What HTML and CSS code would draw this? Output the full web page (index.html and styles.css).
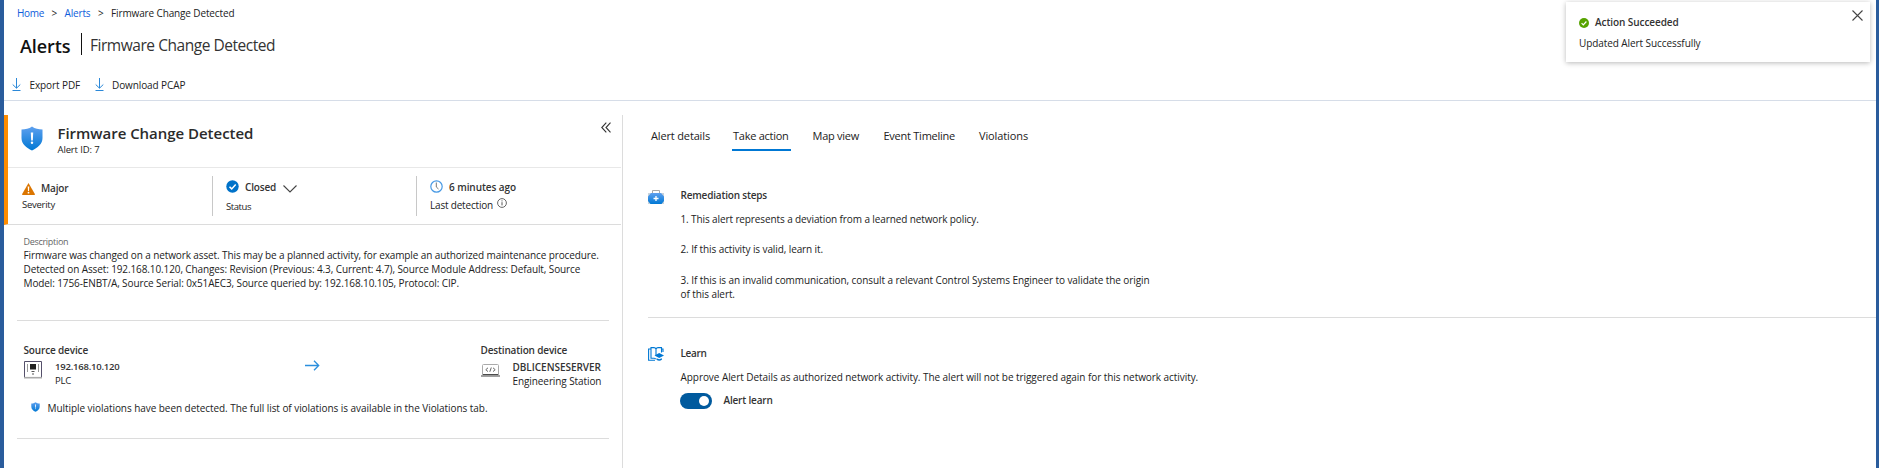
FILE: index.html
```html
<!DOCTYPE html>
<html lang="en">
<head>
<meta charset="utf-8">
<title>Alerts - Firmware Change Detected</title>
<link rel="stylesheet" href="styles.css">
</head>
<body>
<svg width="0" height="0" class="defs" aria-hidden="true">
  <defs>
    <linearGradient id="blue" x1="0" y1="0" x2="0" y2="1"><stop offset="0" stop-color="#5ea0ef"/><stop offset="1" stop-color="#0078d4"/></linearGradient>
    <symbol id="shield" viewBox="0 0 22 25">
      <path d="M11 .5C8 2.700 4.500 3.500.5 3.500V12c0 6 5 10 10.500 12.500C16.500 22 21.500 18 21.500 12V3.500c-4 0-7.500-.8-10.500-3z" fill="url(#blue)"/>
      <path d="M9.800 6.500h2.400l-.4 8h-1.600z" fill="#fff"/><circle cx="11" cy="16.800" r="1.200" fill="#fff"/>
    </symbol>
    <symbol id="download" viewBox="0 0 9 13"><path d="M4.500 0v10M.7 6.500l3.800 3.700 3.800-3.700M.5 12.500h8" fill="none" stroke="#2b88d8"/></symbol>
  </defs>
</svg>
<div class="page">
  <nav class="crumbs">
    <a class="c-home">Home</a><span class="sep">&gt;</span><a class="c-alerts">Alerts</a><span class="sep">&gt;</span><span class="c-now">Firmware Change Detected</span>
  </nav>
  <header class="heading"><h1>Alerts</h1><span class="bar"></span><span class="subtitle">Firmware Change Detected</span></header>
  <div class="commands">
    <svg width="9" height="13"><use href="#download"/></svg><span class="cmd first">Export PDF</span>
    <svg width="9" height="13"><use href="#download"/></svg><span class="cmd">Download PCAP</span>
  </div>
  <main class="body">
    <section class="left">
      <div class="card">
        <div class="card-head">
          <svg class="big-shield" width="22" height="25"><use href="#shield"/></svg>
          <div class="card-title"><h2>Firmware Change Detected</h2><p class="alert-id">Alert ID: 7</p></div>
          <svg class="collapse" width="10" height="11" viewBox="0 0 10 11"><path d="M5.300.7L.8 5.500l4.500 4.800M9.500.7L5 5.500l4.500 4.800" fill="none" stroke="#333" stroke-width="1.100"/></svg>
        </div>
        <div class="facts">
          <div class="fact severity">
            <div class="value"><svg width="13" height="12" viewBox="0 0 13 12"><path d="M6.500 0L13 11.200q0 .8-.8.8H.8q-.8 0-.8-.8z" fill="#db7500"/><path d="M5.700 3.500h1.600L7 8H6z" fill="#fff"/><circle cx="6.500" cy="9.700" r=".9" fill="#fff"/></svg><b class="t-major">Major</b></div>
            <p class="t-severity">Severity</p>
          </div>
          <div class="fact status">
            <div class="value"><svg width="13" height="13" viewBox="0 0 13 13"><circle cx="6.500" cy="6.500" r="6.200" fill="#0072c9"/><path d="M3.500 6.700l2.200 2.200 4-4.300" fill="none" stroke="#fff" stroke-width="1.500"/></svg><b class="t-closed">Closed</b><svg class="chev" width="14" height="8" viewBox="0 0 14 8"><path d="M.5.500L7 7 13.500.5" fill="none" stroke="#444" stroke-width="1.100"/></svg></div>
            <p class="t-status">Status</p>
          </div>
          <div class="fact time">
            <div class="value"><svg width="13" height="13" viewBox="0 0 13 13"><circle cx="6.500" cy="6.500" r="5.700" fill="#fff" stroke="#4a9ae4" stroke-width="1.200"/><path d="M6.300 2.500V7l2.200 2" fill="none" stroke="#777"/></svg><b class="t-time">6 minutes ago</b></div>
            <p class="t-last">Last detection<svg width="10" height="10" viewBox="0 0 10 10"><circle cx="5" cy="5" r="4.400" fill="none" stroke="#555" stroke-width=".9"/><path d="M5 4.200v3.200M5 2.400v1" stroke="#555"/></svg></p>
          </div>
        </div>
      </div>
      <div class="description">
        <p class="label">Description</p>
        <p>Firmware was changed on a network asset. This may be a planned activity, for example an authorized maintenance procedure.<br>Detected on Asset: 192.168.10.120, Changes: Revision (Previous: 4.3, Current: 4.7), Source Module Address: Default, Source<br>Model: 1756-ENBT/A, Source Serial: 0x51AEC3, Source queried by: 192.168.10.105, Protocol: CIP.</p>
      </div>
      <div class="devices">
        <div class="pair">
          <div class="device source">
            <b class="t-src">Source device</b>
            <div class="dev-row">
              <svg width="18" height="18" viewBox="0 0 18 18"><path d="M.5 17V.5h17V17" fill="#fff" stroke="#55506b"/><path d="M0 16.700h18" stroke="#aaa" stroke-width="1.600"/><path d="M6 3h6v5.500H6z" fill="#222"/><path d="M3.500 3v8M14.500 3v8" stroke="#999"/><path d="M7.500 10.500h3M9 12v2" stroke="#555"/></svg>
              <div><b class="t-ip">192.168.10.120</b><p class="t-plc">PLC</p></div>
            </div>
          </div>
          <svg class="arrow" width="15" height="11" viewBox="0 0 15 11"><path d="M0 5.500h13.500M9 .8l4.700 4.700L9 10.200" fill="none" stroke="#2b8fdd" stroke-width="1.300"/></svg>
          <div class="device dest">
            <b class="t-dst">Destination device</b>
            <div class="dev-row">
              <svg class="laptop" width="19" height="13" viewBox="0 0 19 13"><path d="M1.500 11V1.500q0-1 1-1h14q1 0 1 1V11" fill="#fff" stroke="#aaa"/><path d="M2 10.700h15" stroke="#222"/><path d="M0 12h19" stroke="#888" stroke-width="1.600"/><path d="M7 3.800L4.800 5.700 7 7.600M12 3.800l2.200 1.900L12 7.600M10.300 3.500l-1.500 4.300" fill="none" stroke="#555" stroke-width=".9"/></svg>
              <div><b class="t-host">DBLICENSESERVER</b><p class="t-eng">Engineering Station</p></div>
            </div>
          </div>
        </div>
        <div class="notice"><svg width="9" height="10"><use href="#shield"/></svg><span>Multiple violations have been detected. The full list of violations is available in the Violations tab.</span></div>
      </div>
    </section>
    <section class="right">
      <nav class="tabs"><span class="tab tab-details">Alert details</span><span class="tab tab-action">Take action</span><span class="tab tab-map">Map view</span><span class="tab tab-events">Event Timeline</span><span class="tab tab-viol">Violations</span></nav>
      <div class="block remediation">
        <svg class="kit" width="16" height="14" viewBox="0 0 16 14"><path d="M4.500 3.500V.5h7v3" fill="none" stroke="#a9a9a9"/><rect y="3" width="16" height="11" rx="1" fill="url(#blue)"/><path d="M0 3h3L0 6.500zM16 3h-3l3 3.500zM0 11l2.500 3H0zM16 11l-2.500 3H16z" fill="#c9d3dc"/><path d="M8 6v5M5.500 8.500h5" stroke="#fff" stroke-width="1.300"/></svg>
        <div>
          <b class="t-rem">Remediation steps</b>
          <p class="step1">1. This alert represents a deviation from a learned network policy.</p>
          <p class="step2">2. If this activity is valid, learn it.</p>
          <p class="step3">3. If this is an invalid communication, consult a relevant Control Systems Engineer to validate the origin<br>of this alert.</p>
        </div>
      </div>
      <div class="block learn">
        <svg class="book" width="16" height="14" viewBox="0 0 16 14"><path d="M7.700 12.300c0-.7-.7-1.100-1.500-1.100H3V.6h3q1.500 0 2 1.400v6M8 2Q8.500.6 10 .6h3.500v5M3 2H.6v11.300H7M13.500 2h1.500v3" fill="none" stroke="#0078d4" stroke-width="1.100"/><path d="M6.500 8.500L11.200 6 16 8.500 11.200 11z" fill="#0078d4"/><path d="M8.500 11.300v1.500q2.700 1.800 5.400 0v-1.500l-2.700 1z" fill="#0078d4"/></svg>
        <div>
          <b class="t-learn">Learn</b>
          <p class="approve">Approve Alert Details as authorized network activity. The alert will not be triggered again for this network activity.</p>
          <div class="toggle-row"><span class="toggle"><i></i></span><b class="t-toggle">Alert learn</b></div>
        </div>
      </div>
    </section>
  </main>
  <aside class="toast">
    <div class="toast-head"><svg width="10" height="10" viewBox="0 0 10 10"><circle cx="5" cy="5" r="5" fill="#57a300"/><path d="M2.600 5.200l1.700 1.700 3.100-3.400" fill="none" stroke="#fff" stroke-width="1.200"/></svg><b>Action Succeeded</b></div>
    <p>Updated Alert Successfully</p>
    <svg class="close" width="11" height="11" viewBox="0 0 11 11"><path d="M.5.5l10 10M10.500.5l-10 10" stroke="#444" stroke-width="1.100"/></svg>
  </aside>
</div>
</body>
</html>
```
FILE: styles.css
```css
*{box-sizing:border-box}
body{margin:0;font:10px/14px "Open Sans","Noto Sans",sans-serif;letter-spacing:-.1px;color:#222;background:#fff;overflow:hidden}
h1,h2,p{margin:0;font-weight:400}
b{font-weight:600;color:#333}
svg{display:block;flex:none}
.defs{position:absolute}
.page{position:relative;height:468px;border-left:4px solid #2a5c9c;border-right:3px solid #2a5c9c;white-space:nowrap;padding-top:6px}
.crumbs{display:flex;height:14px;padding-left:13px}
.crumbs a{color:#0e5ddb}
.c-home{width:27px;letter-spacing:-.32px}
.c-alerts{width:26px;letter-spacing:-.15px}
.sep{width:20.500px;text-align:center}
.c-now{letter-spacing:-.13px}
.heading{display:flex;height:22px;margin-top:13px;padding-left:16px}
h1{font-size:18px;font-weight:600;line-height:26px;letter-spacing:-.08px;width:61px;color:#111}
.bar{width:1px;height:22px;background:#111}
.subtitle{font-size:15.500px;line-height:25px;letter-spacing:-.46px;margin-left:8px;color:#333}
.commands{display:flex;height:46px;border-bottom:1px solid #d6dde8;padding:23px 0 0 8px}
.cmd{margin-left:8.500px}
.first{width:65px}
.body{display:flex;height:367px;padding-top:14px}
.left{width:619px;border-right:1px solid #dcdcdc}
.card{width:617px;height:110px;border-left:4px solid #ff8c00;border-bottom:1px solid #dcdcdc}
.card-head{display:flex;height:53px;border-bottom:1px solid #e8e8e8;padding-left:13px}
.big-shield{margin-top:11px}
.card-title{margin:8px 0 0 14.500px;width:543.500px}
h2{font-size:15px;line-height:20px;font-weight:600;color:#2b2b2b}
.card-title h2{letter-spacing:-.03px}
.alert-id{font-size:9.500px;letter-spacing:-.13px}
.collapse{margin-top:7px}
.facts{display:flex;padding-top:8px}
.fact{height:40px}
.severity{width:204px;padding:5px 0 0 14px}
.status{width:204px;padding:4px 0 0 13px;border-left:1px solid #c8c8c8}
.time{padding:4px 0 0 13px;border-left:1px solid #c8c8c8}
.value{display:flex}
.severity svg{margin-top:2px}
.value b{margin-left:6px}
.status .chev{margin:5px 0 0 7px}
.t-major{letter-spacing:-.15px}
.t-severity{font-size:9.500px;letter-spacing:-.26px;margin-top:3px}
.t-closed{letter-spacing:-.18px}
.t-status{font-size:9.500px;letter-spacing:-.44px;margin-top:6px}
.t-time{letter-spacing:-.07px}
.t-last{display:flex;letter-spacing:-.19px;margin-top:4px}
.t-last svg{margin:0 0 0 4px}
.description{height:95px;margin:0 13px;padding:10px 0 0 6.500px}
.description p{letter-spacing:-.11px}
.description .label{font-size:9px;letter-spacing:-.3px;line-height:14px;height:13px;color:#666}
.devices{height:119px;margin:0 13px;border:1px solid #dcdcdc;border-width:1px 0;padding:22px 0 0 6.500px}
.pair{display:flex;height:58px}
.device b{display:block}
.source{width:281px}
.dest{margin-left:161px}
.dev-row{display:flex;gap:13.500px;padding-top:2px}
.source .dev-row svg{margin-top:2px}
.laptop{margin-top:5px}
.dest .dev-row{gap:13px}
.t-src{letter-spacing:-.15px}
.device .t-ip{font-size:9.500px;letter-spacing:-.22px;padding-top:1px;height:14px}
.t-plc{font-size:9.500px;letter-spacing:-.22px;padding-top:1px}
.t-dst{letter-spacing:-.16px}
.t-host{letter-spacing:-.03px;padding-top:1px;height:14px}
.t-eng{letter-spacing:-.09px;padding-top:1px}
.arrow{margin-top:17px}
.notice{display:flex;padding-left:7px;letter-spacing:-.057px}
.notice svg{margin:1px 8px 0 0}
.right{flex:1;padding-left:25px}
.tabs{display:flex;height:36px;padding:13px 0 0 3px}
.tab{font-size:11px;line-height:16px;height:23px}
.tab-details{width:81px;letter-spacing:-.15px}
.tab-action{width:59px;padding-left:1px;letter-spacing:-.27px;font-weight:500;border-bottom:2px solid #0078d4}
.tab-map{margin-left:21.500px;width:71px;letter-spacing:-.26px}
.tab-events{width:95.500px;letter-spacing:-.25px}
.tab-viol{letter-spacing:-.11px}
.block{display:flex;gap:16.500px}
.block b{display:block}
.remediation{height:167px;padding-top:37px;border-bottom:1px solid #dcdcdc}
.kit{margin-top:2px}
.t-rem{letter-spacing:-.19px}
.step1{margin-top:10px;letter-spacing:-.11px}
.step2{margin-top:16px}
.step3{margin-top:17px;letter-spacing:-.08px}
.learn{padding-top:28px}
.book{margin-top:1px}
.t-learn{letter-spacing:-.35px}
.approve{margin-top:10px;letter-spacing:-.06px}
.toggle-row{display:flex;margin-top:9px}
.toggle{width:32px;height:16px;border-radius:8px;background:#005a9e;padding:3px 0 0 19px;margin-left:-.5px}
.toggle i{display:block;width:10px;height:10px;border-radius:50%;background:#fff}
.t-toggle{margin-left:11.500px;letter-spacing:-.18px}
.toast{position:absolute;left:1562px;top:2px;width:304px;height:60px;padding:13px 0 0 13px;background:#fff;box-shadow:0 1px 5px rgba(0,0,0,.28)}
.toast-head{display:flex}
.toast-head svg{margin-top:3px}
.toast-head b{margin-left:6px;letter-spacing:-.08px}
.toast p{margin-top:7px;letter-spacing:-.08px}
.close{position:absolute;right:7.500px;top:7.500px}
```
